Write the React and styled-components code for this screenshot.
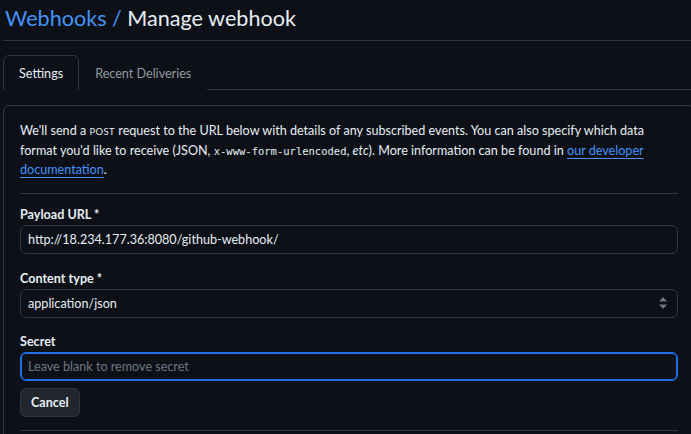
import React from "react";
import styled, { createGlobalStyle } from "styled-components";

const GlobalStyle = createGlobalStyle`
  html, body {
    margin: 0;
    background: #0d1117;
    overflow: hidden;
  }
  body {
    font-family: Lato, "Noto Sans", sans-serif;
    color: #e6edf3;
  }
`;

const Page = styled.div`
  width: 692px;
  padding-left: 3px;
`;

const Header = styled.div`
  height: 40px;
  border-bottom: 1px solid #30363d;
  padding-left: 2px;
  display: flex;
  align-items: center;
`;

const Title = styled.h2`
  margin: 0;
  font-size: 21.6px;
  font-weight: 400;
  line-height: 36px;
  margin-top: -4px;
  color: #e6edf3;
  a {
    color: #4493f8;
    text-decoration: none;
  }
`;

const Tabs = styled.nav`
  display: flex;
  margin-top: 14px;
  border-bottom: 1px solid #30363d;
`;

const Tab = styled.div`
  padding: 0 15px;
  height: 34px;
  display: flex;
  align-items: center;
  font-size: 12.6px;
  color: ${(p) => (p.$active ? "#e6edf3" : "#9198a1")};
  border: 1px solid ${(p) => (p.$active ? "#30363d" : "transparent")};
  border-bottom: none;
  border-radius: 6px 6px 0 0;
  margin-bottom: -1px;
  background: #0d1117;
`;

const Box = styled.div`
  margin-top: 15px;
  border: 1px solid #30363d;
  border-radius: 6px;
  padding: 15px 16px 0;
`;

const Intro = styled.p`
  margin: 0;
  font-size: 12.6px;
  line-height: 19.5px;
  padding-bottom: 13px;
  border-bottom: 1px solid #30363d;
  a {
    color: #4493f8;
    text-decoration: underline;
    text-underline-offset: 3px;
  }
  code {
    font-family: "DejaVu Sans Mono", "Liberation Mono", monospace;
    font-size: 10.5px;
    line-height: 1;
  }
`;

const SmallCaps = styled.span`
  font-size: 9.5px;
  letter-spacing: 0.4px;
  line-height: 1;
`;

const Field = styled.div`
  margin-top: ${(p) => p.$top ?? 15}px;
`;

const Label = styled.label`
  display: block;
  font-size: 12.6px;
  font-weight: 700;
  line-height: 18px;
  margin-bottom: 1px;
`;

const Input = styled.input`
  box-sizing: border-box;
  display: block;
  width: 100%;
  height: 29px;
  margin: 0;
  background: #0d1117;
  border: 1px solid ${(p) => (p.$focus ? "#1f6feb" : "#30363d")};
  box-shadow: ${(p) => (p.$focus ? "inset 0 0 0 1px #1f6feb" : "none")};
  border-radius: 6px;
  padding: 0 7px;
  color: #e6edf3;
  font-family: inherit;
  font-size: 12.6px;
  outline: none;
  &::placeholder {
    color: #6e7681;
  }
`;

const SelectBox = styled.div`
  box-sizing: border-box;
  height: 29px;
  border: 1px solid #30363d;
  border-radius: 6px;
  padding: 0 9px 0 7px;
  display: flex;
  align-items: center;
  justify-content: space-between;
  font-size: 12.6px;
`;

const Button = styled.button`
  display: block;
  margin-top: 7px;
  height: 29px;
  padding: 0 10px;
  background: #21262d;
  border: 1px solid #30363d;
  border-radius: 6px;
  color: #e6edf3;
  font-family: inherit;
  font-size: 12.6px;
  font-weight: 700;
`;

const Footer = styled.div`
  margin-top: 13px;
  border-top: 1px solid #30363d;
  height: 20px;
`;

const Caret = () => (
  <svg width="10" height="14" viewBox="0 0 10 14">
    <path d="M5 1 L9 5.5 H1 Z" fill="#6e7681" />
    <path d="M5 13 L9 8.5 H1 Z" fill="#6e7681" />
  </svg>
);

const App = () => (
  <>
    <GlobalStyle />
    <Page>
      <Header>
        <Title>
          <a href="#">Webhooks</a> <a href="#">/</a> Manage webhook
        </Title>
      </Header>
      <Tabs>
        <Tab $active>Settings</Tab>
        <Tab>Recent Deliveries</Tab>
      </Tabs>
      <Box>
        <Intro>
          We'll send a <SmallCaps>POST</SmallCaps> request to the URL below with details of any
          subscribed events. You can also specify which data format you'd like to receive (JSON,{" "}
          <code>x-www-form-urlencoded</code>, <em>etc</em>). More information can be found in{" "}
          <a href="#">our developer documentation</a>.
        </Intro>
        <Field $top={12}>
          <Label>Payload URL *</Label>
          <Input defaultValue="http://18.234.177.36:8080/github-webhook/" />
        </Field>
        <Field $top={16}>
          <Label>Content type *</Label>
          <SelectBox>
            <span>application/json</span>
            <Caret />
          </SelectBox>
        </Field>
        <Field>
          <Label>Secret</Label>
          <Input $focus placeholder="Leave blank to remove secret" />
        </Field>
        <Button>Cancel</Button>
        <Footer />
      </Box>
    </Page>
  </>
);

export default App;
